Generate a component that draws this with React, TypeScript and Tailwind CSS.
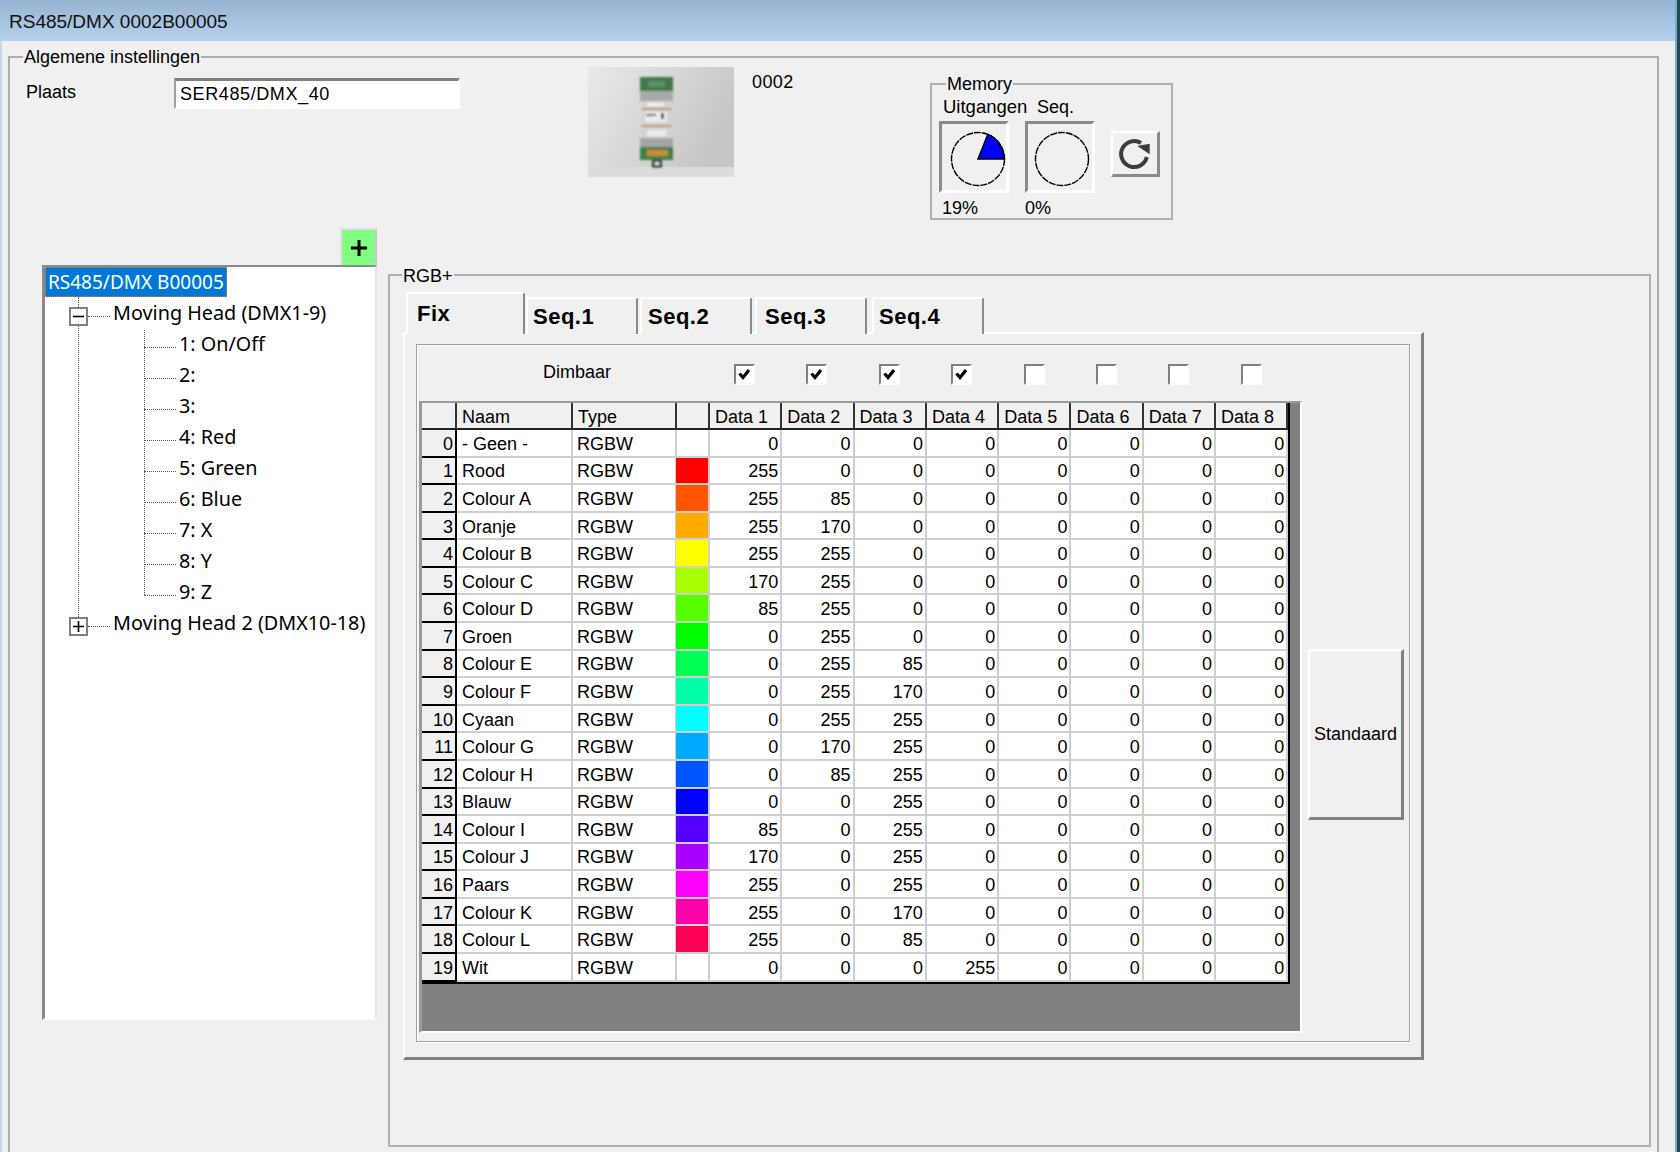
import { Fragment } from "react";

const ROWS: [string, number, number, number, number, string][] = [
  ["- Geen -", 0, 0, 0, 0, "#ffffff"],
  ["Rood", 255, 0, 0, 0, "#ff0000"],
  ["Colour A", 255, 85, 0, 0, "#ff5500"],
  ["Oranje", 255, 170, 0, 0, "#ffaa00"],
  ["Colour B", 255, 255, 0, 0, "#ffff00"],
  ["Colour C", 170, 255, 0, 0, "#aaff00"],
  ["Colour D", 85, 255, 0, 0, "#55ff00"],
  ["Groen", 0, 255, 0, 0, "#00ff00"],
  ["Colour E", 0, 255, 85, 0, "#00ff55"],
  ["Colour F", 0, 255, 170, 0, "#00ffaa"],
  ["Cyaan", 0, 255, 255, 0, "#00ffff"],
  ["Colour G", 0, 170, 255, 0, "#00aaff"],
  ["Colour H", 0, 85, 255, 0, "#0055ff"],
  ["Blauw", 0, 0, 255, 0, "#0000ff"],
  ["Colour I", 85, 0, 255, 0, "#5500ff"],
  ["Colour J", 170, 0, 255, 0, "#aa00ff"],
  ["Paars", 255, 0, 255, 0, "#ff00ff"],
  ["Colour K", 255, 0, 170, 0, "#ff00aa"],
  ["Colour L", 255, 0, 85, 0, "#ff0055"],
  ["Wit", 0, 0, 0, 255, "#ffffff"],
];

const TABS = [
  { label: "Seq.1", box: "ml-[1px]", pad: "pl-[5px]" },
  { label: "Seq.2", box: "ml-[2px]", pad: "pl-[6px]" },
  { label: "Seq.3", box: "ml-[3px]", pad: "pl-[8px]" },
  { label: "Seq.4", box: "ml-[5px]", pad: "pl-[5px]" },
];

const CHANNELS = ["1: On/Off", "2:", "3:", "4: Red", "5: Green", "6: Blue", "7: X", "8: Y", "9: Z"];
const DIMBAAR = [true, true, true, true, false, false, false, false];

/* ── small bits ── */
function Legend({ text, className }: { text: string; className: string }) {
  return <span className={`absolute bg-[#f0f0f0] px-[1px] leading-[22px] whitespace-nowrap ${className}`}>{text}</span>;
}

function Expander({ open }: { open: boolean }) {
  return (
    <div className="absolute left-[24px] top-[10px] flex h-[19px] w-[19px] items-center justify-center border-2 border-[#808080] bg-white">
      <svg width="13" height="13" viewBox="0 0 13 13">
        <path d={open ? "M1 6.5H12" : "M1 6.5H12M6.5 1V12"} stroke="#000" strokeWidth="1.6" />
      </svg>
    </div>
  );
}

function Check({ on }: { on: boolean }) {
  return (
    <div className="flex h-[21px] w-[21px] items-center justify-center border-2 border-[#808080] border-r-white border-b-white bg-white">
      {on && (
        <svg width="15" height="14" viewBox="0 0 15 14">
          <path d="M2.5 6.5L6 10.5L12 3" fill="none" stroke="#000" strokeWidth="3.2" />
        </svg>
      )}
    </div>
  );
}

function Pie({ cx, slice }: { cx: number; slice: boolean }) {
  return (
    <div className="h-[72px] w-[70px] border-[3px] border-[#8a8a8a] border-r-white border-b-white">
      <svg width="64" height="66" viewBox="0 0 64 66">
        <circle cx={cx} cy="35" r="26.5" fill="none" stroke="#000" strokeWidth="1.4" strokeDasharray="7 1" />
        {slice && <path d={`M${cx} 35L${cx + 26} 35A26.5 26.5 0 0 0 ${cx + 9.8} 10.4Z`} fill="#0000ff" stroke="#000" strokeWidth="1.5" />}
      </svg>
    </div>
  );
}

function DeviceImage() {
  return (
    <svg width="146" height="110" viewBox="0 0 146 110" className="mt-[8px] ml-[128px] shrink-0">
      <defs>
        <linearGradient id="back" x1="0" y1="0" x2="1" y2="0.4">
          <stop offset="0" stopColor="#e9e9e9" />
          <stop offset="1" stopColor="#c6c6c6" />
        </linearGradient>
        <filter id="soft"><feGaussianBlur stdDeviation="0.8" /></filter>
      </defs>
      <rect width="146" height="110" fill="url(#back)" />
      <rect y="100" width="146" height="10" fill="#dcdcdc" />
      <g filter="url(#soft)">
        <rect x="52" y="10" width="33" height="14" fill="#3f7a4c" />
        <rect x="60" y="14" width="17" height="6" fill="#5d8f68" />
        <rect x="52" y="24" width="33" height="11" fill="#a8a9a8" />
        <rect x="53.5" y="34" width="30" height="37" fill="#d2d2d4" />
        <rect x="53.5" y="41" width="30" height="2" fill="#c99253" />
        <rect x="53.5" y="58" width="30" height="2" fill="#c99253" />
        <rect x="59" y="36" width="17" height="3" fill="#f2f2f2" />
        <rect x="57" y="45" width="22" height="10" fill="#ececec" />
        <rect x="58" y="47" width="10" height="2" fill="#555" />
        <rect x="73" y="46" width="3" height="6" fill="#333" />
        <rect x="59" y="63" width="19" height="6" fill="#ececec" />
        <rect x="52" y="71" width="33" height="9" fill="#a5a5a5" />
        <rect x="52" y="80" width="33" height="13" fill="#3e8046" />
        <rect x="59" y="83" width="21" height="6" fill="#c98a3a" />
        <rect x="64" y="93" width="10" height="7.5" fill="#333" />
        <rect x="66.5" y="95" width="5" height="3" fill="#e2e2e2" />
      </g>
    </svg>
  );
}

function Memory() {
  return (
    <div className="relative mt-[25px] ml-[136px] h-[137px] w-[243px] shrink-0 border-2 border-[#b0b0b0]">
      <Legend text="Memory" className="-top-[12px] left-[14px]" />
      <div className="mt-[11px] flex h-[22px] pl-[11px] leading-[22px]">
        <span className="w-[94px] text-[18.5px]">Uitgangen</span>
        <span>Seq.</span>
      </div>
      <div className="mt-[3px] ml-[7px] flex items-start">
        <Pie cx={36} slice />
        <div className="ml-[16px]">
          <Pie cx={34} slice={false} />
        </div>
        <button className="mt-[10px] ml-[16px] flex h-[46px] w-[49px] items-center justify-center border-2 border-white border-r-[3px] border-b-[3px] border-r-[#8a8a8a] border-b-[#8a8a8a] bg-[#f0f0f0]">
          <svg width="36" height="32" viewBox="8 6 36 32">
            <path d="M32 11A13 13 0 1 0 37.8 25" fill="none" stroke="#3c3c3c" strokeWidth="4" />
            <path d="M28.3 14L40.7 11.7V22.3Z" fill="#3c3c3c" />
          </svg>
        </button>
      </div>
      <div className="mt-[4px] flex pl-[10px] leading-[22px]">
        <span className="w-[83px]">19%</span>
        <span>0%</span>
      </div>
    </div>
  );
}

function Tree() {
  return (
    <div className="h-[755px] w-[335px] border-t-2 border-r-2 border-b-2 border-l-[3px] border-t-[#8a8a8a] border-r-[#e4e4e4] border-b-white border-l-[#8a8a8a] bg-white">
      <div className="relative text-[19.8px] font-['Noto_Sans',sans-serif]">
        <div className="absolute top-[30px] left-[33px] h-[320px] border-l border-dotted border-[#555]" />
        <div className="absolute top-[63px] left-[99px] h-[265px] border-l border-dotted border-[#555]" />

        <div className="flex h-[30px] w-[182px] items-center border border-dotted border-[#d9822b] bg-[#0078d7] pl-[2px] text-[19px] whitespace-nowrap text-white">
          RS485/DMX B00005
        </div>

        <div className="relative flex h-[31px] items-center pl-[68px] whitespace-nowrap">
          <Expander open />
          <div className="absolute top-[19px] left-[43px] w-[22px] border-t border-dotted border-[#555]" />
          Moving Head (DMX1-9)
        </div>
        {CHANNELS.map((c) => (
          <div key={c} className="relative flex h-[31px] items-center pl-[134px] whitespace-nowrap">
            <div className="absolute top-[19px] left-[99px] w-[32px] border-t border-dotted border-[#555]" />
            {c}
          </div>
        ))}
        <div className="relative flex h-[31px] items-center pl-[68px] whitespace-nowrap">
          <Expander open={false} />
          <div className="absolute top-[19px] left-[43px] w-[22px] border-t border-dotted border-[#555]" />
          Moving Head 2 (DMX10-18)
        </div>
      </div>
    </div>
  );
}

function HeadCell({ text }: { text?: string }) {
  return (
    <div className="flex items-center border-r-2 border-b-2 border-r-[#333] border-b-[#222] bg-[#f0f0f0] pt-[3px] pl-[5px]">{text}</div>
  );
}

function NumCell({ value }: { value: number }) {
  return (
    <div className="flex items-center justify-end border-r-2 border-b-2 border-[#cfcfcf] bg-white pt-[3px] pr-[2px]">{value}</div>
  );
}

function DataGrid() {
  return (
    <div className="h-[632px] w-[883px] shrink-0 border-t-2 border-r-2 border-b-2 border-l-[3px] border-t-[#9a9a9a] border-r-white border-b-white border-l-[#9a9a9a] bg-[#808080]">
      <div className="grid w-[868.4px] grid-cols-[35px_116px_104px_33px_repeat(8,72.3px)] grid-rows-[27px] auto-rows-[27.58px] border-r-2 border-b-2 border-black text-[18px]">
        <HeadCell />
        <HeadCell text="Naam" />
        <HeadCell text="Type" />
        <HeadCell />
        {[1, 2, 3, 4, 5, 6, 7, 8].map((n) => (
          <HeadCell key={n} text={`Data ${n}`} />
        ))}
        {ROWS.map(([name, d1, d2, d3, d4, colour], i) => (
          <Fragment key={i}>
            <div className="flex items-center justify-end border-r-2 border-b-2 border-black bg-[#f0f0f0] pt-[3px] pr-[2px]">{i}</div>
            <div className="flex items-center border-r-2 border-b-2 border-[#cfcfcf] bg-white pt-[3px] pl-[5px]">{name}</div>
            <div className="flex items-center border-r-2 border-b-2 border-[#cfcfcf] bg-white pt-[3px] pl-[4px]">RGBW</div>
            <div className={`border-r-2 border-b-2 border-[#cfcfcf] ${colour === "#ffffff" ? "" : "-ml-[1px]"}`} style={{ background: colour }} />
            <NumCell value={d1} />
            <NumCell value={d2} />
            <NumCell value={d3} />
            <NumCell value={d4} />
            <NumCell value={0} />
            <NumCell value={0} />
            <NumCell value={0} />
            <NumCell value={0} />
          </Fragment>
        ))}
      </div>
    </div>
  );
}

function TabPage() {
  return (
    <>
      <div className="relative z-10 ml-[13px] mt-[16px] flex h-[42px] items-end pl-[3px] -mb-[2px] text-[22px] leading-none font-bold tracking-[0.5px]">
        <div className="h-[42px] w-[119px] rounded-t-[2px] border-t-2 border-l-2 border-r-2 border-t-white border-l-white border-r-[#8a8a8a] bg-[#f0f0f0] pt-[9px] pl-[9px]">Fix</div>
        {TABS.map((t) => (
          <div key={t.label} className={`h-[37px] w-[112px] rounded-t-[2px] border-t-2 border-l-2 border-r-2 border-t-white border-l-white border-r-[#8a8a8a] bg-[#f0f0f0] pt-[7px] ${t.box} ${t.pad}`}>
            {t.label}
          </div>
        ))}
      </div>

      <div className="ml-[13px] h-[728px] w-[1021px] border-2 border-r-[3px] border-b-[3px] border-t-white border-r-[#808080] border-b-[#808080] border-l-white pt-[10px] pl-[11px]">
        <div className="h-[698px] w-[994px] border border-[#a0a0a0] shadow-[1px_1px_0_#fff,inset_1px_1px_0_#fff]">
          <div className="flex h-[56px] items-center">
            <span className="ml-[126px] w-[191px] pb-[2px]">Dimbaar</span>
            <div className="grid grid-cols-[repeat(8,72.4px)] pt-[2px]">
              {DIMBAAR.map((on, i) => (
                <Check key={i} on={on} />
              ))}
            </div>
          </div>
          <div className="ml-[2px] flex items-start">
            <DataGrid />
            <button className="mt-[248px] ml-[6px] h-[171px] w-[96px] border-2 border-r-[3px] border-b-[3px] border-t-white border-r-[#808080] border-b-[#808080] border-l-white bg-[#f0f0f0] text-[18px]">
              Standaard
            </button>
          </div>
        </div>
      </div>
    </>
  );
}

/* ══════════════ Page ══════════════ */
export default function App() {
  return (
    <div className="flex h-[1152px] w-[1680px] overflow-hidden bg-[#f0f0f0] font-['Liberation_Sans',Arial,sans-serif] text-[18px] text-black">
      <div className="flex min-w-0 flex-1 flex-col">
        {/* Title bar */}
        <div className="flex h-[41px] shrink-0 items-center bg-linear-to-b from-[#98b3d1] to-[#b5d1ec] pt-[3px] pl-[9px] text-[19px] text-[#111]">
          RS485/DMX 0002B00005
        </div>

        <div className="flex flex-1 border-l-2 border-l-[#c4d8ee]">
          {/* Algemene instellingen */}
          <div className="relative mt-[15px] ml-[6px] h-[1110px] w-[1651px] border-2 border-[#adadad]">
            <Legend text="Algemene instellingen" className="-top-[12px] left-[13px]" />

            <div className="flex h-[170px] items-start">
              <span className="mt-[23px] ml-[16px] w-[148px] leading-[22px]">Plaats</span>
              <div className="mt-[20px] flex h-[31px] w-[286px] items-center border-t-[3px] border-r-2 border-b-2 border-l-2 border-t-[#808080] border-r-white border-b-white border-l-[#a0a0a0] bg-white pl-[4px] tracking-[0.6px]">
                SER485/DMX_40
              </div>
              <div className="mt-[1px] flex items-start">
                <DeviceImage />
              </div>
              <span className="mt-[13px] ml-[18px] w-[42px] leading-[22px] tracking-[0.4px]">0002</span>
              <Memory />
            </div>

            <div className="flex items-start">
              <div className="ml-[32px] flex w-[335px] shrink-0 flex-col items-end">
                <button className="flex h-[37px] w-[37px] items-center justify-center border-2 border-t-[#e0e0e0] border-r-[#c8c8c8] border-b-0 border-l-[#e0e0e0] bg-[#80ff80] pt-[1px]">
                  <svg width="18" height="18" viewBox="0 0 18 18">
                    <path d="M9 1V17M1 9H17" stroke="#000" strokeWidth="3" />
                  </svg>
                </button>
                <Tree />
              </div>

              <div className="relative mt-[46px] ml-[11px] h-[873px] w-[1263px] border-2 border-[#b0b0b0]">
                <Legend text="RGB+" className="-top-[11px] left-[12px]" />
                <TabPage />
              </div>
            </div>
          </div>
        </div>
      </div>
      <div className="w-[2px] shrink-0 bg-[#5bb8dc]" />
      <div className="w-[3px] shrink-0 bg-[#33424f]" />
    </div>
  );
}
